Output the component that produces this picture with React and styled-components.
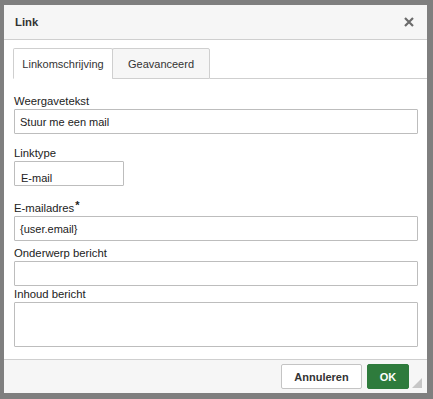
import React from "react";
import styled, { createGlobalStyle } from "styled-components";

const GlobalStyle = createGlobalStyle`
  html, body { margin: 0; padding: 0; background: #7f7f7f; }
  body { font-family: "Liberation Sans", Arial, Helvetica, sans-serif; }
  * { box-sizing: border-box; }
`;

const Page = styled.div`
  width: 433px;
  height: 399px;
  padding: 5px 0 0 4px;
  background: #7f7f7f;
`;

const Dialog = styled.div`
  position: relative;
  width: 423px;
  height: 388px;
  background: #fff;
  display: flex;
  flex-direction: column;
`;

const Header = styled.div`
  height: 35px;
  flex: none;
  background: #f6f6f6;
  border-bottom: 1px solid #cfcfcf;
  display: flex;
  align-items: center;
  justify-content: space-between;
  padding: 0 13px 0 11px;
`;

const Title = styled.div`
  font-size: 11.3px;
  font-weight: 700;
  color: #333;
`;

const CloseButton = styled.button`
  border: 0;
  background: none;
  padding: 0;
  width: 10px;
  height: 10px;
  display: flex;
  cursor: pointer;
`;

const Body = styled.div`
  flex: 1;
  display: flex;
  flex-direction: column;
  padding-top: 8px;
`;

const TabBar = styled.div`
  display: flex;
  align-items: flex-end;
  height: 31px;
  padding-left: 9px;
`;

const Tab = styled.div`
  height: 31px;
  display: flex;
  align-items: center;
  justify-content: center;
  font-size: 11px;
  color: #333;
  border: 1px solid #cfcfcf;
  border-bottom: ${(p) => (p.$active ? "1px solid #fff" : "1px solid #cfcfcf")};
  background: ${(p) => (p.$active ? "#fff" : "#f6f6f6")};
  width: ${(p) => p.$w}px;
  margin-left: ${(p) => (p.$first ? 0 : -1)}px;
  border-radius: 2px 2px 0 0;
`;

const TabFill = styled.div`
  flex: 1;
  height: 1px;
  background: #cfcfcf;
`;

const Form = styled.div`
  display: flex;
  flex-direction: column;
  padding: 0 9px 0 10px;
`;

const Field = styled.div`
  display: flex;
  flex-direction: column;
  margin-top: ${(p) => p.$mt}px;
`;

const Label = styled.label`
  font-size: 11.3px;
  line-height: 13px;
  height: 13px;
  margin-bottom: 1px;
  color: #222;
  white-space: nowrap;
`;

const Star = styled.span`
  font-weight: 700;
  font-size: 11px;
  position: relative;
  top: -3px;
  margin-left: 1px;
`;

const Input = styled.div`
  height: ${(p) => p.$h || 25}px;
  width: ${(p) => p.$w || 404}px;
  border: 1px solid #bdbdbd;
  border-radius: 1px;
  background: #fff;
  font-size: 11px;
  color: #222;
  display: flex;
  align-items: ${(p) => (p.$low ? "flex-end" : "center")};
  padding: ${(p) => (p.$low ? "0 5px 1px 6px" : "0 5px 0 5px")};
  white-space: nowrap;
`;

const Footer = styled.div`
  height: 34px;
  flex: none;
  background: #f6f6f6;
  border-top: 1px solid #cfcfcf;
  display: flex;
  justify-content: flex-end;
  align-items: flex-start;
  gap: 5px;
  padding: 4px 18px 0 0;
`;

const Button = styled.button`
  height: 25px;
  width: ${(p) => p.$w}px;
  font-family: inherit;
  font-size: 11px;
  font-weight: 700;
  border-radius: 2px;
  border: 1px solid ${(p) => (p.$primary ? "#2e7b3c" : "#c4c4c4")};
  background: ${(p) => (p.$primary ? "#2e7b3c" : "#fff")};
  color: ${(p) => (p.$primary ? "#fff" : "#333")};
  padding: 0;
  cursor: pointer;
`;

const Grip = styled.svg`
  position: absolute;
  right: 5px;
  bottom: 5px;
`;

export default function App() {
  return (
    <>
      <GlobalStyle />
      <Page>
        <Dialog>
          <Header>
            <Title>Link</Title>
            <CloseButton aria-label="Sluiten">
              <svg width="10" height="10" viewBox="0 0 10 10">
                <path d="M1 1L9 9M9 1L1 9" stroke="#6b6b6b" strokeWidth="2.2" strokeLinecap="butt" />
              </svg>
            </CloseButton>
          </Header>
          <Body>
            <TabBar>
              <Tab $active $first $w={100}>Linkomschrijving</Tab>
              <Tab $w={98}>Geavanceerd</Tab>
              <TabFill />
            </TabBar>
            <Form>
              <Field $mt={16}>
                <Label>Weergavetekst</Label>
                <Input>Stuur me een mail</Input>
              </Field>
              <Field $mt={13}>
                <Label>Linktype</Label>
                <Input $w={110} $low>E-mail</Input>
              </Field>
              <Field $mt={16}>
                <Label>
                  E-mailadres<Star>*</Star>
                </Label>
                <Input>{"{user.email}"}</Input>
              </Field>
              <Field $mt={6}>
                <Label>Onderwerp bericht</Label>
                <Input />
              </Field>
              <Field $mt={2}>
                <Label>Inhoud bericht</Label>
                <Input $h={45} />
              </Field>
            </Form>
          </Body>
          <Footer>
            <Button $w={81}>Annuleren</Button>
            <Button $w={42} $primary>OK</Button>
          </Footer>
          <Grip width="10" height="10" viewBox="0 0 10 10">
            <polygon points="10,0 10,10 0,10" fill="#c6c6c6" />
          </Grip>
        </Dialog>
      </Page>
    </>
  );
}
